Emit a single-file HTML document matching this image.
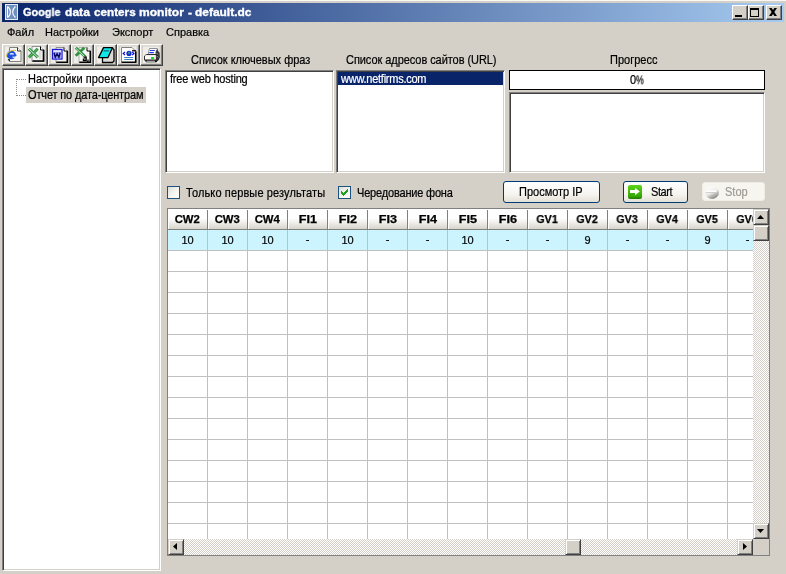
<!DOCTYPE html>
<html>
<head>
<meta charset="utf-8">
<title>Google data centers monitor - default.dc</title>
<style>
*{box-sizing:border-box;margin:0;padding:0}
html,body{width:786px;height:574px;overflow:hidden;background:#d4d0c8}
body{position:relative;font-family:"Liberation Sans",sans-serif;font-size:11px;color:#000;line-height:13px}
.a{position:absolute}
.m{transform:scaleY(1.1);transform-origin:0 6.5px}
.t{position:absolute;white-space:nowrap;line-height:13px;height:13px;will-change:transform;-webkit-text-stroke:0.2px currentColor}
#topline{left:0;top:0;width:786px;height:1px;background:#faf9f6}
#title{left:2px;top:3px;width:782px;height:19px;background:linear-gradient(to right,#0a246a 0%,#a6caf0 100%)}
#title .cap{left:21px;top:3px;color:#fff;font-weight:bold;font-size:11px;transform-origin:0 0;transform:scaleX(1.078);-webkit-text-stroke:0.35px #fff}
.tb{position:absolute;top:2px;width:16px;height:15px;background:#d4d0c8;border:1px solid;border-color:#fff #404040 #404040 #fff;box-shadow:inset -1px -1px 0 #808080}
.btn{position:absolute;top:44px;width:23px;height:22px;background:#d4d0c8;border:1px solid;border-color:#fff #404040 #404040 #fff;box-shadow:inset -1px -1px 0 #808080, inset 1px 1px 0 #dedbd4}
.btn svg{position:absolute;left:-1px;top:-1px}
.sunk{position:absolute;background:#fff;border:1px solid;border-color:#808080 #fff #fff #808080;box-shadow:inset 1px 1px 0 #404040, inset -1px -1px 0 #d4d0c8}
.xpbtn{position:absolute;border:1px solid #003c74;border-radius:3px;background:linear-gradient(to bottom,#ffffff 0%,#f6f5f0 60%,#e3e1d6 100%)}
.chk{position:absolute;width:13px;height:13px;border:1px solid #1c5180;background:linear-gradient(135deg,#dcdcd7 0%,#f3f3ef 50%,#ffffff 100%)}
#grid{left:167px;top:208px;width:603px;height:348px;background:#fff;border:1px solid #808080;overflow:hidden}
#gb{left:0;top:21px;width:601px;height:330px;background-image:linear-gradient(to right,transparent 39px,#c0c0c0 39px),linear-gradient(to bottom,transparent 20px,#c0c0c0 20px);background-size:40px 21px,40px 21px}
#r1{left:0;top:21px;width:601px;height:20px;background-color:#ccf4ff;background-image:linear-gradient(to right,transparent 39px,#c0c0c0 39px);background-size:40px 20px}
.hc{position:absolute;top:0;width:40px;height:21px;background:linear-gradient(to bottom,#ffffff 0%,#fefefe 45%,#f3f2ef 62%,#e5e3dd 82%,#d6d3cb 100%);border-right:1px solid #808080;border-bottom:1px solid #808080;font-weight:bold;text-align:center;line-height:21px;padding-top:0}
.hc:before{content:"";position:absolute;left:0;top:0;width:1px;height:20px;background:#fff}
.hc:after{content:"";position:absolute;right:-1px;top:0;width:1px;height:1px;background:#fff}
.hc span{display:inline-block;-webkit-text-stroke:0.25px #000;will-change:transform}
.CW{transform:scaleX(1.03)}.FI{transform:scaleX(1.15)}.GV{transform:scaleX(0.97)}
.dc{will-change:transform;-webkit-text-stroke:0.2px #000;position:absolute;top:21px;width:39px;height:20px;text-align:center;line-height:20px}
.sb{background:repeating-conic-gradient(#fff 0% 25%,#d4d0c8 0% 50%) 0 0/2px 2px}
.sbb{position:absolute;width:16px;height:16px;background:#d4d0c8;border:1px solid;border-color:#d4d0c8 #404040 #404040 #d4d0c8;box-shadow:inset 1px 1px 0 #fff, inset -1px -1px 0 #808080}
.sbb svg{position:absolute}
</style>
</head>
<body>
<div class="a" id="topline"></div>
<div class="a" id="title">
<svg class="a" style="left:3px;top:1px" width="13" height="16" viewBox="0 0 13 16"><rect width="13" height="16" fill="#6f8fc2"/><rect x="0.5" y="0.5" width="12" height="15" fill="none" stroke="#e6edf7"/><path d="M2.5 2.5V13.5M2.5 2.5C6.3 5 6.3 11 2.5 13.5" fill="none" stroke="#fff" stroke-width="1.1"/><path d="M10.5 2.5C6.7 5.5 6.7 10.5 10.5 13.5" fill="none" stroke="#fff" stroke-width="1.1"/></svg>
<div class="t cap" style="left:20.5px;transform:scaleX(0.99)">Google</div><div class="t cap" style="left:62.5px;transform:scaleX(1.10)">data</div><div class="t cap" style="left:91.5px;transform:scaleX(1.065)">centers</div><div class="t cap" style="left:137.3px;transform:scaleX(1.097)">monitor</div><div class="t cap" style="left:185.5px;transform:scaleX(1.1)">-</div><div class="t cap" style="left:193.3px;transform:scaleX(1.086)">default.dc</div>
<div class="tb" style="left:730px"><div class="a" style="left:2px;top:9px;width:7px;height:2px;background:#000"></div></div>
<div class="tb" style="left:746px"><div class="a" style="left:1px;top:2px;width:9px;height:9px;border:1px solid #000;border-top-width:2px"></div></div>
<div class="tb" style="left:764px"><svg class="a" style="left:2px;top:2px" width="8" height="8" viewBox="0 0 9 8" preserveAspectRatio="none"><path d="M0 0h3l1.5 1.9L6 0H9L6 4 9 8H6L4.5 6.1 3 8H0l3-4z" fill="#000"/></svg></div>
</div>
<div class="t" style="left:7px;top:26px">Файл</div>
<div class="t" style="left:45px;top:26px">Настройки</div>
<div class="t" style="left:112px;top:26px">Экспорт</div>
<div class="t" style="left:166px;top:26px">Справка</div>
<div class="btn" style="left:2px"><svg width="23" height="22" viewBox="0 0 23 22"><rect x="3" y="2.5" width="16.5" height="16.5" fill="#efede9"/><path d="M7.5 3.5h8l3.5 3.5v10.5h-11.5z" fill="#f6f5f2" stroke="#808080"/><path d="M15.5 3.5v3.5h3.5" fill="#fff" stroke="#303030"/>
<ellipse cx="9.3" cy="11" rx="4.6" ry="4.3" fill="#1a4fe0"/><ellipse cx="9.8" cy="10.2" rx="2.3" ry="1.2" fill="#dfe8ff"/><rect x="7" y="10.6" width="7.5" height="1.3" fill="#1a4fe0"/><path d="M10.5 12.6h4v1.2h-4z" fill="#f6f5f2"/><path d="M4.5 12.5C5 8 10 5.5 14 6.5" fill="none" stroke="#e0c020" stroke-width="1"/><path d="M6 15.5l2 1" stroke="#000" stroke-width="1.2"/></svg></div>
<div class="btn" style="left:25px"><svg width="23" height="22" viewBox="0 0 23 22"><rect x="3" y="2.5" width="16.5" height="16.5" fill="#efede9"/><path d="M7 2.5h8.5l3.5 3.5v11.5h-12z" fill="#f8f7f5" stroke="#909090"/><path d="M18.5 6v11h-11" fill="none" stroke="#000" stroke-width="1.6"/><path d="M15.5 2.5v3.5h3.5" fill="#fff" stroke="#000"/>
<path d="M13.5 8h3M13.5 10h3M13.5 12h3M13.5 14h3" stroke="#c8c8c8"/>
<path d="M3.8 4.8l9 8.6M12.8 4.8l-9 8.6" stroke="#2f9440" stroke-width="2.9"/><path d="M4 5l9 8.5" stroke="#e4f4e4" stroke-width="0.9"/><path d="M12.6 5l-9 8.5" stroke="#8cc898" stroke-width="0.6"/></svg></div>
<div class="btn" style="left:48px"><svg width="23" height="22" viewBox="0 0 23 22"><rect x="3" y="2.5" width="16.5" height="16.5" fill="#efede9"/><path d="M8 3.5h8l3.5 3.5v11.5h-11.5z" fill="#f4f3ef" stroke="#909090"/><path d="M19.3 7v11.3h-11" fill="none" stroke="#000" stroke-width="1.6"/><path d="M16 3.5v3.5h3.5" fill="#fff" stroke="#000"/>
<rect x="4.5" y="5.5" width="9.5" height="9.5" fill="#f4f4ff" stroke="#1818d8" stroke-width="1.3"/><rect x="5.2" y="7.8" width="8.1" height="6.5" fill="#9a9af4"/><path d="M6 8.8l1.3 4.4 1.8-3.5 1.8 3.5 1.3-4.4" fill="none" stroke="#080860" stroke-width="1.4"/></svg></div>
<div class="btn" style="left:71px"><svg width="23" height="22" viewBox="0 0 23 22"><rect x="3" y="2.5" width="16.5" height="16.5" fill="#efede9"/><path d="M8 3.5h8l3.5 3.5v11.5h-11.5z" fill="#f6f5f2" stroke="#b0b0b0"/><path d="M19.3 7v11.3h-11" fill="none" stroke="#000" stroke-width="1.6"/><path d="M16 3.5v3.5h3.5" fill="#fff" stroke="#000"/>
<path d="M4.8 3.8l9.7 9.2M13.3 3.8l-8.6 8" stroke="#2f9440" stroke-width="2.9"/><path d="M5 4.5l9 8.5" stroke="#e4f4e4" stroke-width="0.9"/>
<path d="M12.6 13.2h2.6v3.4h-2.8v-1.6h2.8" fill="none" stroke="#000" stroke-width="1.2"/><path d="M17 15.5v2h-1" fill="none" stroke="#000" stroke-width="1.2"/></svg></div>
<div class="btn" style="left:94px"><svg width="23" height="22" viewBox="0 0 23 22"><rect x="3" y="2.5" width="16.5" height="16.5" fill="#efede9"/><path d="M8.5 13v5.5h10l1.5-1.5v-11l-1.5-2" fill="#dcdad6" stroke="#000" stroke-width="1.3"/>
<path d="M9.5 3.6h9l-4.5 10h-9.5z" fill="#10e8e8" stroke="#000" stroke-width="1.3" stroke-linejoin="round"/><rect x="9.4" y="6.1" width="5.6" height="1.5" rx="0.7" fill="#18788a"/></svg></div>
<div class="btn" style="left:117px"><svg width="23" height="22" viewBox="0 0 23 22"><rect x="3" y="2.5" width="16.5" height="16.5" fill="#efede9"/><path d="M4.5 3.5h10.5l4 4v11h-14.5z" fill="#fff" stroke="#808080"/><path d="M18.7 7.5v10.8h-14" fill="none" stroke="#000" stroke-width="1.5"/><path d="M15 6.8h4" stroke="#000" stroke-width="1.3"/>
<circle cx="12" cy="9.4" r="2.6" fill="#1428d8"/><path d="M11 8.2l1.6-.6.6 1.4-1.4 1.4z" fill="#30b060"/>
<path d="M8 8l-1.8 1.5 1.8 1.5M15.2 8l1.8 1.5-1.8 1.5" fill="none" stroke="#1414d0" stroke-width="1.2"/>
<path d="M7.2 13.5h9M7.2 15.5h9" stroke="#3c7cc0" stroke-width="1.1"/></svg></div>
<div class="btn" style="left:140px"><svg width="23" height="22" viewBox="0 0 23 22"><rect x="3" y="2.5" width="16.5" height="16.5" fill="#efede9"/><path d="M8 11l1.5-6.5h8l.5 6.5z" fill="#fff" stroke="#909090"/><path d="M10 6.5h4.8M9.3 8.6h4.5" stroke="#2038f0" stroke-width="1.2"/>
<path d="M4.5 12l2-1.5h10.5l1 1.5v4h-13.5z" fill="#e4e2de" stroke="#303030"/><path d="M5 12.2h12" stroke="#fff" stroke-width="1.2"/><rect x="5" y="13.2" width="6" height="1.6" fill="#fff"/><rect x="11" y="13" width="3" height="2" fill="#10e020"/>
<path d="M4.6 16.3h13.4l-1.6 1.9h-10.2z" fill="#000"/><path d="M6.5 17.3h8.5" stroke="#fff" stroke-width="0.8"/>
<path d="M15.5 8l1.5-3 1.2 2.2 1.4 1.2.3 5.2-1.5 3-2.2.4z" fill="#222" opacity="0.88"/><path d="M16.5 9l1.5 1.5M16.8 12l1.5 1.5" stroke="#b0b0c8" stroke-width="0.7"/></svg></div>
<div class="sunk" style="left:2px;top:68px;width:159px;height:503px"></div>
<div class="a" style="left:26px;top:87px;width:120px;height:16px;background:#d4d0c8"></div>
<svg class="a" style="left:15px;top:78px" width="12" height="19" viewBox="0 0 12 19"><path d="M1.5 1v17M2 1.5h9M2 17.5h9" stroke="#8c8c8c" stroke-dasharray="1 1" fill="none"/></svg>
<div class="t m" style="left:28.3px;top:73px;letter-spacing:0.08px">Настройки проекта</div>
<div class="t m" style="left:28px;top:89px;letter-spacing:-0.15px">Отчет по дата-центрам</div>
<div class="t m" style="left:190.5px;top:54px">Список ключевых фраз</div>
<div class="t m" style="left:345.5px;top:54px;letter-spacing:-0.06px">Список адресов сайтов (URL)</div>
<div class="t m" style="left:610px;top:54px">Прогресс</div>
<div class="sunk" style="left:165px;top:70px;width:169px;height:103px"></div>
<div class="t m" style="left:170px;top:73px;letter-spacing:-0.2px">free web hosting</div>
<div class="sunk" style="left:336px;top:70px;width:169px;height:103px"></div>
<div class="a" style="left:338px;top:72px;width:165px;height:13px;background:#0a246a"></div>
<div class="t m" style="left:340.5px;top:73px;color:#fff;letter-spacing:-0.25px">www.netfirms.com</div>
<div class="a" style="left:509px;top:70px;width:256px;height:20px;background:#fff;border:1px solid #000"></div>
<div class="t m" style="left:629.8px;top:74px">0</div>
<div class="t m" style="left:635.9px;top:74px;transform:scale(0.8,1.1)">%</div>
<div class="sunk" style="left:509px;top:92px;width:256px;height:81px"></div>
<div class="chk" style="left:167px;top:186px"></div>
<div class="t m" style="left:185.5px;top:187px;letter-spacing:0.12px">Только первые результаты</div>
<div class="chk" style="left:338px;top:186px"><svg class="a" style="left:2px;top:2px" width="7" height="7" viewBox="0 0 7 7" shape-rendering="crispEdges"><path d="M0 2h1v1h1v1h1v-1h1v-1h1v-1h1v-1h1v3h-1v1h-1v1h-1v1h-1v1h-1v-1h-1v-1h-1z" fill="#21a121"/></svg></div>
<div class="t m" style="left:356.5px;top:187px;letter-spacing:-0.18px">Чередование фона</div>
<div class="xpbtn" style="left:503px;top:181px;width:97px;height:22px"></div>
<div class="t m" style="left:518.5px;top:186px">Просмотр IP</div>
<div class="xpbtn" style="left:623px;top:181px;width:65px;height:22px"></div>
<svg class="a" style="left:628px;top:185px" width="14" height="14" viewBox="0 0 14 14"><defs><linearGradient id="gg" x1="0" y1="0" x2="0" y2="1"><stop offset="0" stop-color="#5cd418"/><stop offset="0.8" stop-color="#34a806"/><stop offset="1" stop-color="#1f7a04"/></linearGradient></defs><rect x="0" y="0" width="14" height="14" rx="2" fill="url(#gg)"/><path d="M2 5h5v-2.3l4.8 3.8-4.8 3.8v-2.3h-5z" fill="#fff"/></svg>
<div class="t m" style="left:651px;top:186px;letter-spacing:-0.4px">Start</div>
<div class="a" style="left:702px;top:182px;width:63px;height:19px;border:1px solid #eeece4;border-radius:3px;background:#f6f5ef"></div>
<svg class="a" style="left:705px;top:186px" width="14" height="13" viewBox="0 0 14 13"><defs><linearGradient id="sg" x1="0.25" y1="0.1" x2="0.75" y2="1"><stop offset="0" stop-color="#fbfbfa"/><stop offset="0.45" stop-color="#ecece9"/><stop offset="0.7" stop-color="#b4b4b0"/><stop offset="1" stop-color="#7c7c7a"/></linearGradient></defs><ellipse cx="7" cy="6.5" rx="7" ry="6.5" fill="url(#sg)"/><path d="M1 5.2h10.5" stroke="#fff" stroke-width="1.4"/><path d="M0.8 6.5h11.5" stroke="#c8c8c6" stroke-width="0.8"/></svg>
<div class="t m" style="left:725px;top:186px;color:#9c9a92">Stop</div>
<div class="a" id="grid">
<div class="a" id="gb"></div>
<div class="a" id="r1"></div>
<div class="hc" style="left:0px"><span class="CW">CW2</span></div><div class="dc" style="left:0px">10</div>
<div class="hc" style="left:40px"><span class="CW">CW3</span></div><div class="dc" style="left:40px">10</div>
<div class="hc" style="left:80px"><span class="CW">CW4</span></div><div class="dc" style="left:80px">10</div>
<div class="hc" style="left:120px"><span class="FI">FI1</span></div><div class="dc" style="left:120px"><span style="position:relative;top:-1px">-</span></div>
<div class="hc" style="left:160px"><span class="FI">FI2</span></div><div class="dc" style="left:160px">10</div>
<div class="hc" style="left:200px"><span class="FI">FI3</span></div><div class="dc" style="left:200px"><span style="position:relative;top:-1px">-</span></div>
<div class="hc" style="left:240px"><span class="FI">FI4</span></div><div class="dc" style="left:240px"><span style="position:relative;top:-1px">-</span></div>
<div class="hc" style="left:280px"><span class="FI">FI5</span></div><div class="dc" style="left:280px">10</div>
<div class="hc" style="left:320px"><span class="FI">FI6</span></div><div class="dc" style="left:320px"><span style="position:relative;top:-1px">-</span></div>
<div class="hc" style="left:360px"><span class="GV">GV1</span></div><div class="dc" style="left:360px"><span style="position:relative;top:-1px">-</span></div>
<div class="hc" style="left:400px"><span class="GV">GV2</span></div><div class="dc" style="left:400px">9</div>
<div class="hc" style="left:440px"><span class="GV">GV3</span></div><div class="dc" style="left:440px"><span style="position:relative;top:-1px">-</span></div>
<div class="hc" style="left:480px"><span class="GV">GV4</span></div><div class="dc" style="left:480px"><span style="position:relative;top:-1px">-</span></div>
<div class="hc" style="left:520px"><span class="GV">GV5</span></div><div class="dc" style="left:520px">9</div>
<div class="hc" style="left:560px"><span class="GV">GV6</span></div><div class="dc" style="left:560px"><span style="position:relative;top:-1px">-</span></div>
<div class="a sb" style="left:585px;top:0;width:16px;height:330px"></div>
<div class="a sb" style="left:0;top:330px;width:585px;height:16px"></div>
<div class="a" style="left:585px;top:330px;width:16px;height:16px;background:#d4d0c8"></div>
<div class="sbb" style="left:585px;top:0"><svg style="left:3px;top:5px" width="7" height="4" viewBox="0 0 7 4"><path d="M0 4L3.5 0 7 4z" fill="#000"/></svg></div>
<div class="sbb" style="left:585px;top:16px"></div>
<div class="sbb" style="left:585px;top:314px"><svg style="left:3px;top:5px" width="7" height="4" viewBox="0 0 7 4"><path d="M0 0L3.5 4 7 0z" fill="#000"/></svg></div>
<div class="sbb" style="left:0;top:330px"><svg style="left:4px;top:3px" width="4" height="7" viewBox="0 0 4 7"><path d="M4 0L0 3.5 4 7z" fill="#000"/></svg></div>
<div class="sbb" style="left:397px;top:330px"></div>
<div class="sbb" style="left:569px;top:330px"><svg style="left:5px;top:3px" width="4" height="7" viewBox="0 0 4 7"><path d="M0 0L4 3.5 0 7z" fill="#000"/></svg></div>
</div>
</body>
</html>
